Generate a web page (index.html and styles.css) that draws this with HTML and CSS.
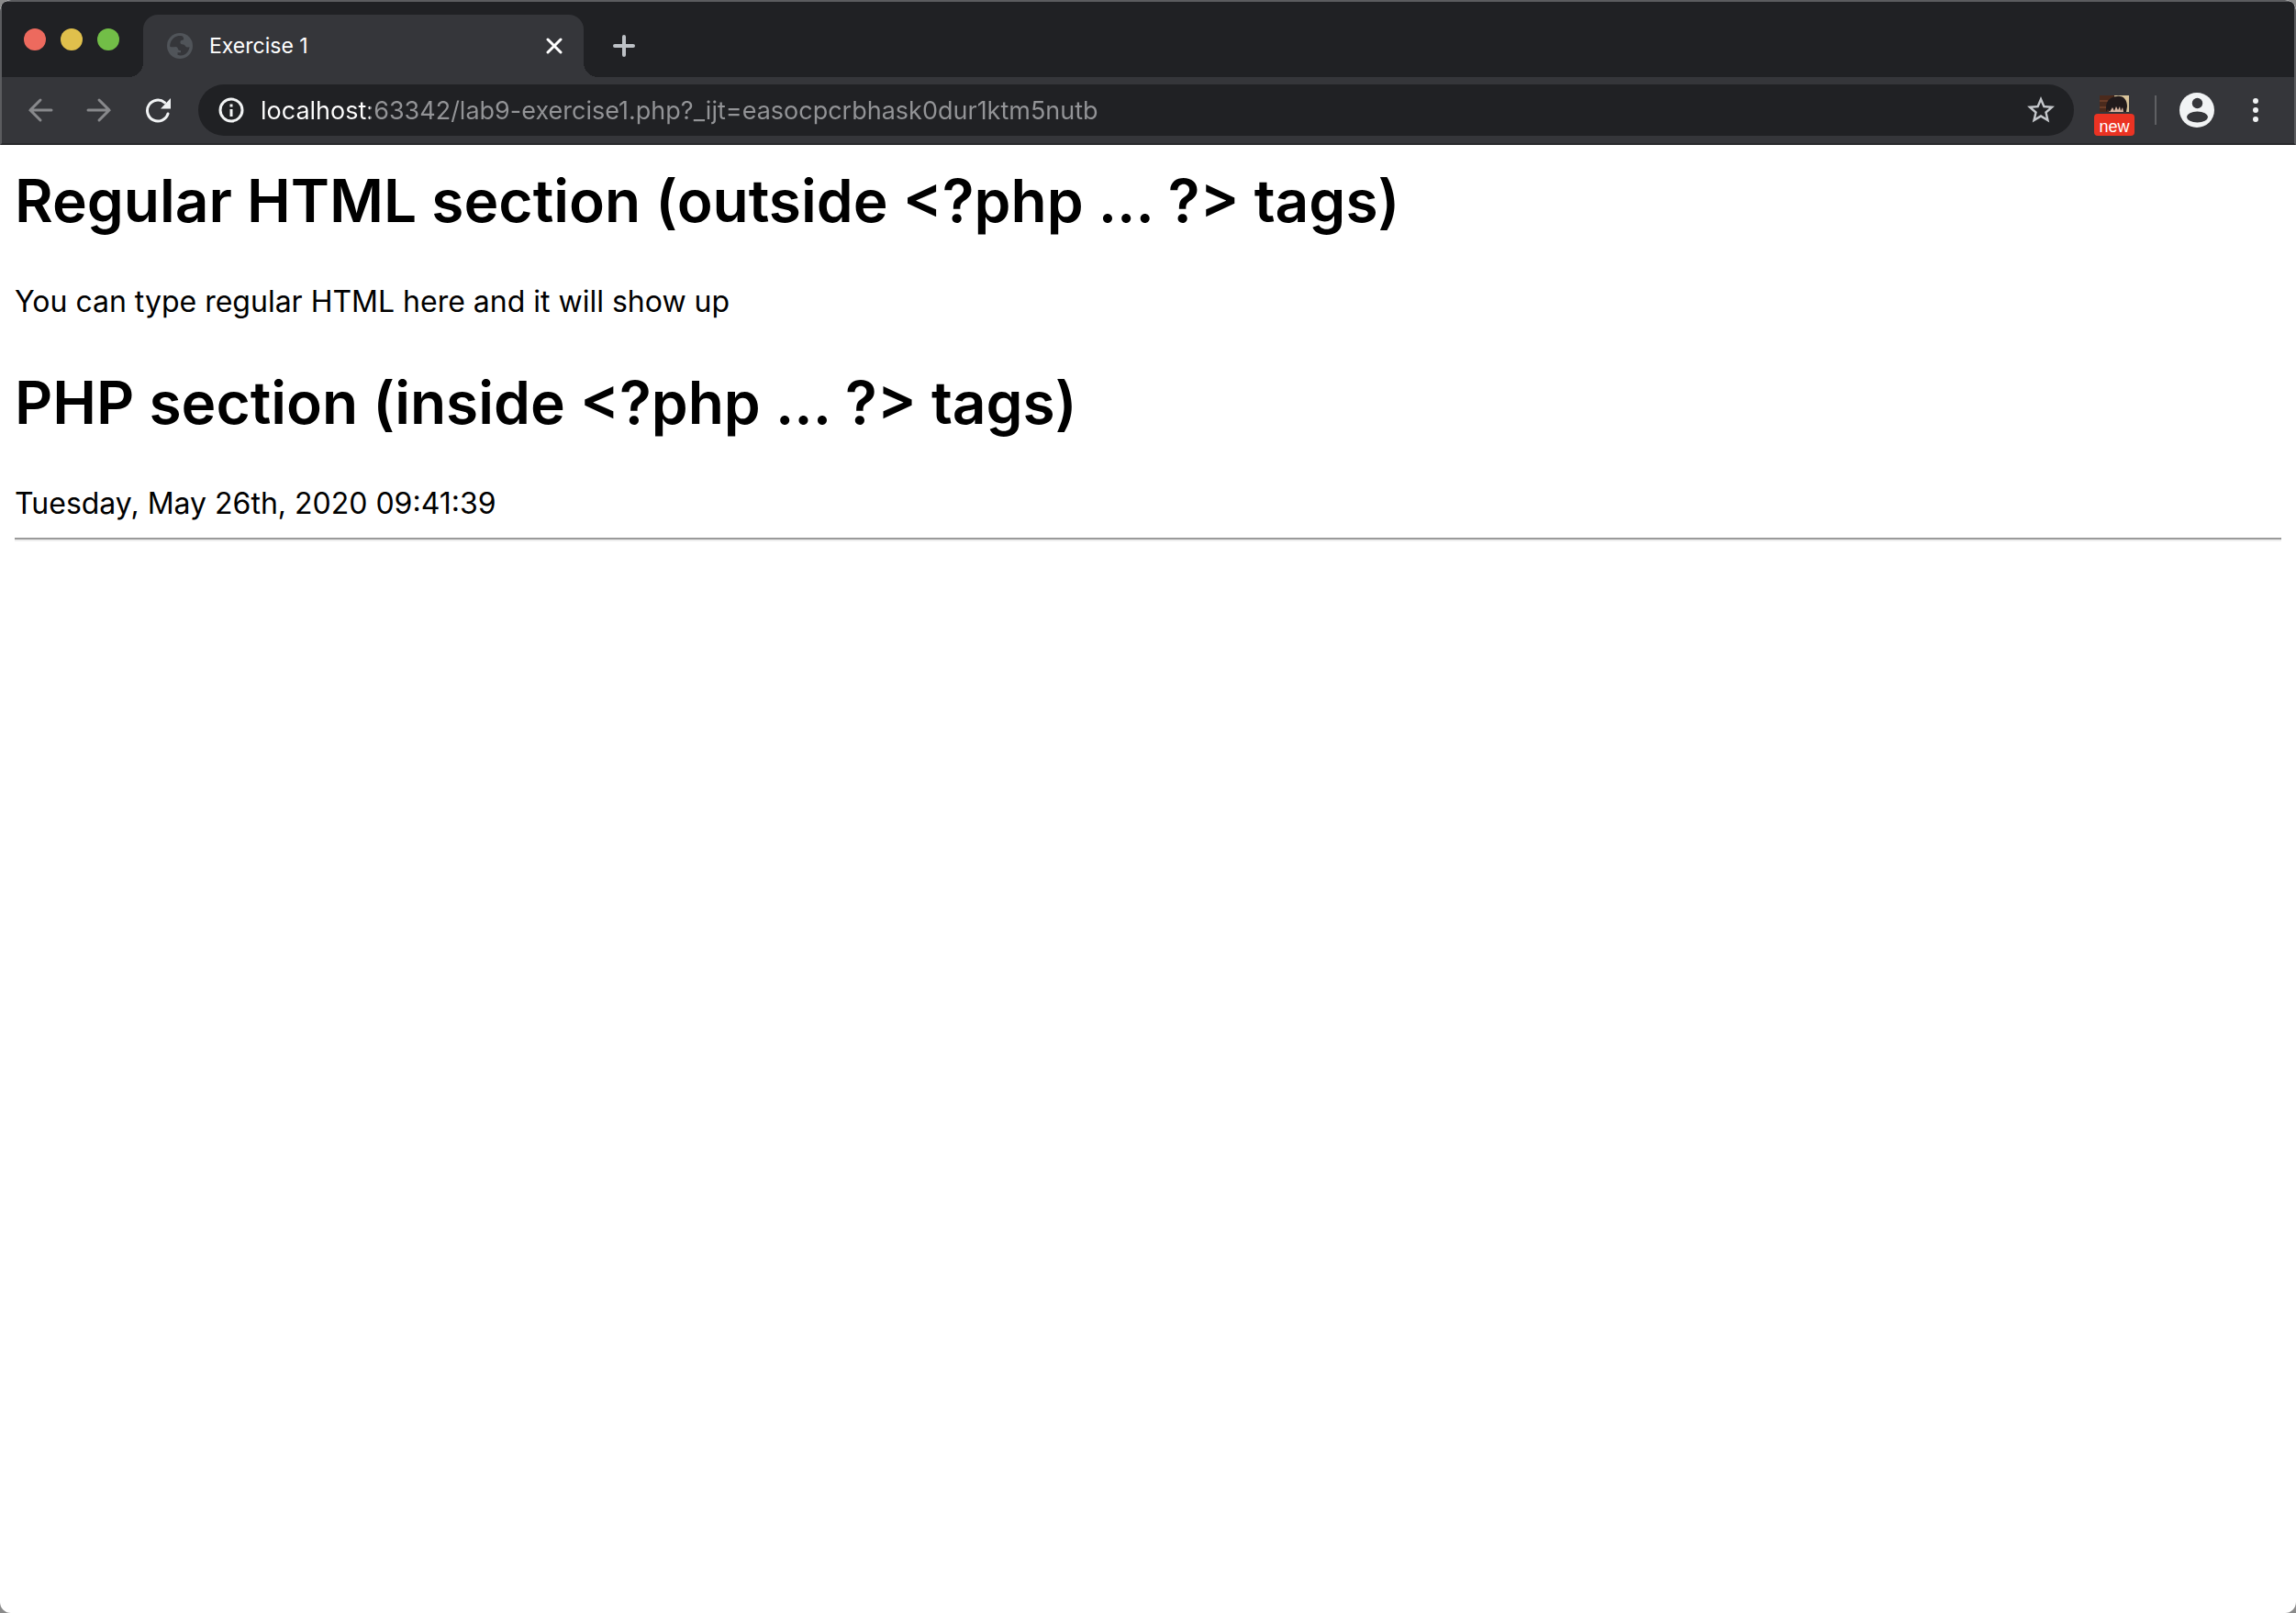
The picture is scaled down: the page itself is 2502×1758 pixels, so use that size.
FILE: index.html
```html
<!DOCTYPE html>
<html lang="en">
<head>
<meta charset="utf-8">
<title>Exercise 1</title>
<link rel="stylesheet" href="styles.css">
</head>
<body>
<div class="window">
  <header class="chrome">
    <div class="tab-strip">
      <div class="window-controls">
        <button class="dot dot-close" aria-label="Close window"></button>
        <button class="dot dot-minimize" aria-label="Minimize window"></button>
        <button class="dot dot-zoom" aria-label="Zoom window"></button>
      </div>
      <div class="tab">
        <svg class="tab-icon" viewBox="0 0 28 28" aria-hidden="true">
          <circle cx="14" cy="14" r="14" fill="#505459"/>
          <path d="M17 3.500c-5-1.500-10.500.5-13 6.500-.8 2-1 4-.6 5 2 .3 4 .2 6 0 1.600.2 2.300 1.200 2.600 2.500.4 1.300 1.500 1.500 3 1.500v2.200h-3.500v2.600c4 1.500 8.500.2 11-3.300 1-1.500 1.800-3.300 2-5.200-1.800.5-3.500.4-4.300-.8-.8-1.500-2.200-2-4-2.200-1.200-.2-1.800-1-1.700-2.300 0-1.500.8-2.300 2.300-2.300 1-.1 1.500-.8 1.400-2z" fill="#35363a"/>
        </svg>
        <span class="tab-title">Exercise 1</span>
        <button class="tab-close" aria-label="Close tab">
          <svg viewBox="0 0 18 18" width="18" height="18"><path d="M2 2l14 14M16 2L2 16" stroke="#fff" stroke-width="3" stroke-linecap="round"/></svg>
        </button>
      </div>
      <button class="new-tab" aria-label="New tab">
        <svg viewBox="0 0 24 24" width="24" height="24"><path d="M12 2v20M2 12h20" stroke="#bdc1c6" stroke-width="4" stroke-linecap="round"/></svg>
      </button>
    </div>
    <div class="toolbar">
      <button class="nav-button" aria-label="Back">
        <svg viewBox="0 0 28 28" width="28" height="28"><path d="M26 14H3M14 3L3 14l11 11" fill="none" stroke="#88898c" stroke-width="3" stroke-linecap="round"/></svg>
      </button>
      <button class="nav-button" aria-label="Forward">
        <svg viewBox="0 0 28 28" width="28" height="28"><path d="M2 14h23M14 3l11 11-11 11" fill="none" stroke="#88898c" stroke-width="3" stroke-linecap="round"/></svg>
      </button>
      <button class="nav-button" aria-label="Reload">
        <svg viewBox="0 0 28 28" width="28" height="28"><path d="M21.500 5.800A11.500 11.500 0 1 0 25 18" fill="none" stroke="#f1f3f4" stroke-width="3" stroke-linecap="round"/><path d="M28 1v11.500H17z" fill="#f1f3f4"/></svg>
      </button>
      <form class="omnibox">
        <svg viewBox="0 0 28 28" width="28" height="28" aria-hidden="true"><circle cx="14" cy="14" r="12" fill="none" stroke="#f1f3f4" stroke-width="3"/><path d="M14 13v8M14 7.500v3" stroke="#f1f3f4" stroke-width="3"/></svg>
        <input class="address" type="text" aria-label="Address" value="localhost:63342/lab9-exercise1.php?_ijt=easocpcrbhask0dur1ktm5nutb">
        <button class="star" type="button" aria-label="Bookmark this page">
          <svg viewBox="0 0 24 24" width="36" height="36"><path fill="#c4c7cb" d="M22 9.240l-7.190-.62L12 2 9.190 8.630 2 9.240l5.460 4.730L5.820 21 12 17.270 18.180 21l-1.630-7.030L22 9.240zM12 15.400l-3.760 2.270 1-4.280-3.320-2.880 4.380-.38L12 6.100l1.710 4.040 4.380.38-3.320 2.880 1 4.280L12 15.400z"/></svg>
        </button>
      </form>
      <button class="extension" aria-label="Extension">
        <svg class="extension-art" viewBox="0 0 32 18" width="32" height="18" aria-hidden="true">
          <path fill="#4b2a1c" d="M0 0h16v18H0z"/><path fill="#d9c49a" d="M16 0h16v18H16z"/>
          <path fill="#6a3c27" d="M0 5h9v2H0zM0 12h7v2H0z"/>
          <path fill="#dcb6a2" d="M10 11h17v7H10z"/>
          <path fill="#211a1b" d="M7 13C7 6 12 1 19 1c7-1 11 4 11 11l-1 6h-3l-1-5-2 4-1-5-2 4-2-4-2 5-2-4-3 5-2-3-2 3z"/>
        </svg>
        <span class="extension-badge">new</span>
      </button>
      <span class="divider"></span>
      <button class="profile" aria-label="Profile">
        <svg viewBox="0 0 38 38" width="38" height="38"><circle cx="19" cy="19" r="19" fill="#f1f3f4"/><circle cx="19.500" cy="11.500" r="5.700" fill="#35363a"/><ellipse cx="19.500" cy="26.500" rx="11.500" ry="6" fill="#35363a"/></svg>
      </button>
      <button class="menu" aria-label="Menu">
        <svg viewBox="0 0 6 26" width="6" height="26" fill="#f1f3f4"><circle cx="3" cy="3" r="3"/><circle cx="3" cy="13" r="3"/><circle cx="3" cy="23" r="3"/></svg>
      </button>
    </div>
  </header>
  <main class="page">
    <h1>Regular HTML section (outside &lt;?php ... ?&gt; tags)</h1>
    <p>You can type regular HTML here and it will show up</p>
    <h1>PHP section (inside &lt;?php ... ?&gt; tags)</h1>
    <p>Tuesday, May 26th, 2020 09:41:39</p>
    <hr>
  </main>
</div>
</body>
</html>
```
FILE: styles.css
```css
* {
  box-sizing: border-box;
}

body {
  margin: 0;
  background: #8a8a8a;
  font-family: Inter, "Liberation Sans", sans-serif;
}

button {
  display: flex;
  align-items: center;
  justify-content: center;
  padding: 0;
  border: 0;
  background: none;
  font-family: inherit;
}

svg {
  display: block;
  flex: none;
}

.window {
  display: flex;
  flex-direction: column;
  min-height: 100vh;
  overflow: hidden;
  border-radius: 12px;
  background: #fff;
}

.chrome {
  border: 2px solid #5b5c5f;
  border-bottom: 2px solid #28292c;
  border-radius: 12px 12px 0 0;
  background: #35363a;
}

.tab-strip {
  display: flex;
  height: 82px;
  padding-left: 24px;
  background: #202124;
}

.window-controls {
  display: flex;
  gap: 16px;
  width: 130px;
  padding-top: 29px;
}

.dot {
  width: 24px;
  height: 24px;
  border-radius: 50%;
}

.dot-close {
  background: #ed6a5e;
}

.dot-minimize {
  background: #e0c04c;
}

.dot-zoom {
  background: #72be47;
}

.tab {
  position: relative;
  display: flex;
  align-items: center;
  width: 480px;
  margin-top: 14px;
  padding: 0 16px 0 26px;
  border-radius: 16px 16px 0 0;
  background: #35363a;
}

.tab::before,
.tab::after {
  content: "";
  position: absolute;
  bottom: 0;
  width: 16px;
  height: 16px;
}

.tab::before {
  right: 100%;
  background: radial-gradient(circle at 0 0, #202124 16px, #35363a 16px);
}

.tab::after {
  left: 100%;
  background: radial-gradient(circle at 100% 0, #202124 16px, #35363a 16px);
}

.tab-icon {
  width: 28px;
  height: 28px;
}

.tab-title {
  flex: 1;
  margin-left: 18px;
  color: #fff;
  font-size: 23px;
}

.tab-close {
  width: 32px;
  height: 32px;
}

.new-tab {
  width: 56px;
  height: 56px;
  margin: 20px 0 0 16px;
}

.toolbar {
  display: flex;
  align-items: center;
  height: 72px;
  padding: 0 20px 0 10px;
}

.nav-button {
  width: 64px;
  height: 56px;
}

.omnibox {
  display: flex;
  flex: 1;
  align-items: center;
  height: 56px;
  margin-left: 12px;
  padding: 0 18px 0 22px;
  border-radius: 28px;
  background: #202124;
}

/* The host part of the address is white, the rest grey */
.address {
  flex: 1;
  min-width: 0;
  height: 48px;
  margin-left: 18px;
  padding: 0;
  border: 0;
  outline: 0;
  background: linear-gradient(to right, #fff 119px, #939497 119px) text;
  color: transparent;
  font-family: inherit;
  font-size: 27px;
}

.extension {
  flex-direction: column;
  gap: 2px;
  width: 44px;
  height: 56px;
  margin-left: 22px;
  padding-top: 12px;
}

.extension-badge {
  width: 44px;
  height: 24px;
  border-radius: 4px;
  background: #eb3323;
  color: #fff;
  font-family: "Liberation Sans", sans-serif;
  font-size: 18px;
  line-height: 28px;
}

.divider {
  width: 2px;
  height: 32px;
  margin: 0 25px 0 22px;
  background: #5f6063;
}

.profile {
  width: 38px;
  height: 38px;
}

.menu {
  width: 44px;
  height: 44px;
  margin-left: 23px;
}

.page {
  padding: 16px;
  color: #000;
}

.page h1 {
  margin: 0 0 42px;
  font-size: 64px;
  font-weight: 600;
  line-height: 90px;
}

.page p {
  margin: 0 0 42px;
  font-size: 32px;
  line-height: 46px;
}

.page p:last-of-type {
  margin-bottom: 14px;
}

.page hr {
  height: 4px;
  margin: 0;
  border: 0;
  border-top: 2px solid #9a9a9a;
  border-bottom: 2px solid #eee;
}
```
